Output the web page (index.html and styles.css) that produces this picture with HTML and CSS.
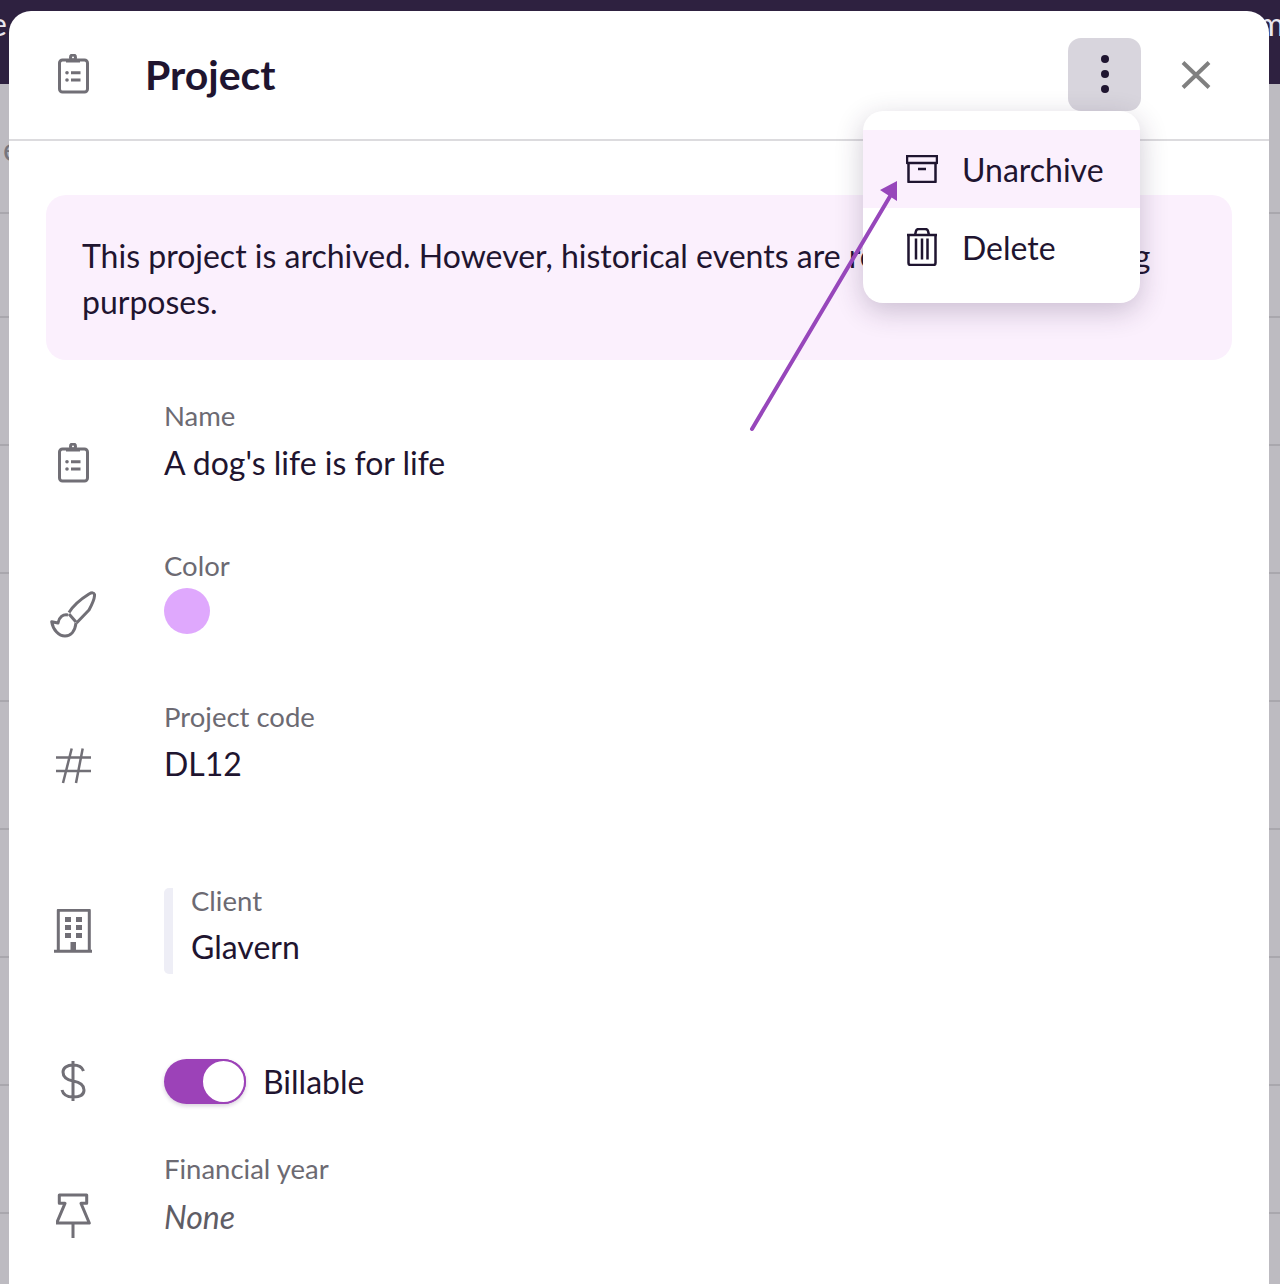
FILE: index.html
```html
<!DOCTYPE html>
<html lang="en">
<head>
    <meta charset="UTF-8">
    <meta name="viewport" content="width=device-width, initial-scale=1.0">
    <title>Project</title>
    <link rel="stylesheet" href="styles.css">
</head>
<body>
    <!-- bits of the page behind the modal -->
    <span class="behind behind-left">e</span>
    <span class="behind behind-right">m</span>
    <span class="behind behind-sub">e</span>

    <div class="modal">
        <div class="modal-header">
            <div class="icon-col">
                <svg class="icon" width="32" height="40" viewBox="0 0 32 40">
                    <rect x="2.500" y="6" width="28" height="32" rx="3"/>
                    <circle cx="16" cy="3.500" r="2.500"/>
                    <path class="solid" d="M9 5h14v3.500H9z"/>
                    <path d="M14 18.700h9.500M14 26h9.500"/>
                    <circle class="solid" cx="10" cy="18.700" r="1.800"/>
                    <circle class="solid" cx="10" cy="26" r="1.800"/>
                </svg>
            </div>
            <h1>Project</h1>
            <button class="menu-btn" type="button" aria-label="More">
                <span class="dot"></span><span class="dot"></span><span class="dot"></span>
            </button>
            <button class="close-btn" type="button" aria-label="Close">
                <svg width="30" height="28" viewBox="0 0 30 28"><path d="M2 1.500l26 25M28 1.500l-26 25"/></svg>
            </button>
        </div>

        <div class="modal-body">
            <div class="notice">This project is archived. However, historical events are retained for reporting purposes.</div>

            <div class="field field-name">
                <div class="icon-col">
                    <svg class="icon" width="32" height="40" viewBox="0 0 32 40">
                        <rect x="2.500" y="6" width="28" height="32" rx="3"/>
                        <circle cx="16" cy="3.500" r="2.500"/>
                        <path class="solid" d="M9 5h14v3.500H9z"/>
                        <path d="M14 18.700h9.500M14 26h9.500"/>
                        <circle class="solid" cx="10" cy="18.700" r="1.800"/>
                        <circle class="solid" cx="10" cy="26" r="1.800"/>
                    </svg>
                </div>
                <div>
                    <div class="label">Name</div>
                    <div class="value">A dog's life is for life</div>
                </div>
            </div>

            <div class="field field-color">
                <div class="icon-col">
                    <svg class="icon" width="46" height="48" viewBox="0 0 46 48">
                        <path d="M19 22.500C23 16 31 9 39 4Q43.500 1.500 44.500 4.500 45 9 39 20L26.500 33"/>
                        <path d="M19 24L26 32"/>
                        <path d="M18 25C13 24 9 27 8 33L1.700 31.700C3 40 9 46 15 46 21 46 25 41 26 33"/>
                    </svg>
                </div>
                <div>
                    <div class="label">Color</div>
                    <div class="swatch"></div>
                </div>
            </div>

            <div class="field field-code">
                <div class="icon-col">
                    <svg class="icon thin" width="36" height="36" viewBox="0 0 36 36">
                        <path d="M1 9.600h35M1 23h35M16.700 .5L8 35M27.700 .5L21 35"/>
                    </svg>
                </div>
                <div>
                    <div class="label">Project code</div>
                    <div class="value">DL12</div>
                </div>
            </div>

            <div class="field field-client">
                <div class="icon-col">
                    <svg class="icon" width="38" height="44" viewBox="0 0 38 44">
                        <path d="M4.300 42V1.300h31V42M0 42.200h38"/>
                        <path class="solid" d="M11 8h6v5h-6zM22 8h6v5h-6zM11 16h6v5h-6zM22 16h6v5h-6zM11 24h6v5h-6zM22 24h6v5h-6zM16.500 33h5.500v9h-5.500z"/>
                    </svg>
                </div>
                <div class="client-box">
                    <div class="label">Client</div>
                    <div class="value">Glavern</div>
                </div>
            </div>

            <div class="field field-billable">
                <div class="icon-col">
                    <svg class="icon" width="26" height="42" viewBox="0 0 26 42">
                        <path d="M23.500 11C22 6.500 18 5 13 5 7 5 3 8 3 12c0 6 5 8 10 9 6 1 11 4 11 9 0 5-5 7-11 7-6 0-10-3-11-7M13 1v40"/>
                    </svg>
                </div>
                <div class="toggle-row">
                    <div class="toggle"><span class="thumb"></span></div>
                    <div class="value">Billable</div>
                </div>
            </div>

            <div class="field field-year">
                <div class="icon-col">
                    <svg class="icon" width="35" height="46" viewBox="0 0 35 46">
                        <path d="M3.300 2h27.400v8.300H25L33.300 30H.7L9 10.300H3.300zM17 30v15"/>
                    </svg>
                </div>
                <div>
                    <div class="label">Financial year</div>
                    <div class="value value-none">None</div>
                </div>
            </div>
        </div>

        <div class="dropdown">
            <div class="dropdown-item active">
                <svg class="item-icon" width="32" height="28" viewBox="0 0 32 28">
                    <path d="M1 1h30v7H1zM2.500 8v19h27V8M12 14h8"/>
                </svg>
                Unarchive
            </div>
            <div class="dropdown-item">
                <svg class="item-icon" width="32" height="38" viewBox="0 0 32 38">
                    <path d="M1 7h30M9 7l1-4q.5-2 3-2h6q2.500 0 3 2l1 4M2.500 7v28q0 2 2 2h23q2 0 2-2V7M10 10.500v21M16 10.500v21M21.500 10.500v21"/>
                </svg>
                Delete
            </div>
        </div>

        <svg class="arrow" width="160" height="262" viewBox="0 0 160 262">
            <path class="arrow-line" d="M6 252L146 16"/>
            <path class="arrow-head" d="M151 4L134 13 151 24z"/>
        </svg>
    </div>
</body>
</html>
```

FILE: styles.css
```css
* {
    box-sizing: border-box;
}
html, body {
    height: 1284px;
}
body {
    margin: 0;
    padding: 11px 11px 0 9px;
    overflow: hidden;
    position: relative;
    font-family: "Lato", sans-serif;
    color: #1f1530;
    background-color: #bdbbc1;
    background-image:
        linear-gradient(#2e2140, #2e2140),
        linear-gradient(to bottom, #bdbbc1 212px, #a9a7ad 212px),
        repeating-linear-gradient(to bottom, transparent 0, transparent 126px, #a9a7ad 126px, #a9a7ad 128px);
    background-size: 100% 84px, 100% 214px, 100% 128px;
    background-position: 0 0, 0 0, 0 62px;
    background-repeat: no-repeat, no-repeat, repeat-y;
}
.behind {
    position: absolute;
    font-size: 32px;
    line-height: 32px;
}
.behind-left {
    left: -10px;
    top: 8px;
    color: #e9e6ee;
}
.behind-right {
    left: 1258px;
    top: 8px;
    color: #e9e6ee;
}
.behind-sub {
    left: 3px;
    top: 133px;
    color: #77757c;
}
.modal {
    position: relative;
    height: 1290px;
    background-color: white;
    border-radius: 22px 22px 0 0;
}
.modal-header {
    display: flex;
    align-items: center;
    height: 130px;
    padding: 0 37px 2px 37px;
    border-bottom: 2px solid #dcdbde;
}
.icon-col {
    width: 54px;
    flex-shrink: 0;
    display: flex;
    justify-content: center;
}
.modal-header h1 {
    margin: 2px 0 0 45px;
    font-size: 41px;
    line-height: 46px;
    font-weight: 700;
    flex: 1;
}
.icon {
    display: block;
    fill: none;
    stroke: #716f76;
    stroke-width: 3;
    stroke-linejoin: round;
}
.icon.thin {
    stroke-width: 2.500;
}
.icon .solid {
    fill: #716f76;
    stroke: none;
}
.menu-btn {
    width: 73px;
    height: 73px;
    padding: 0;
    border: none;
    border-radius: 13px;
    background-color: #d8d5dd;
    display: flex;
    flex-direction: column;
    align-items: center;
    justify-content: center;
    gap: 7px;
}
.dot {
    width: 8px;
    height: 8px;
    border-radius: 50%;
    background-color: #1f1530;
}
.close-btn {
    width: 30px;
    height: 28px;
    margin: 2px 21px 0 40px;
    padding: 0;
    border: none;
    background: none;
}
.close-btn svg {
    display: block;
    fill: none;
    stroke: #808080;
    stroke-width: 4;
}
.modal-body {
    padding: 54px 37px 0 37px;
}
.notice {
    padding: 38px 36px 34px 36px;
    height: 165px;
    background-color: #fbf0fd;
    border-radius: 20px;
    font-size: 32px;
    line-height: 46px;
}
.field {
    display: flex;
}
.field .icon-col {
    align-self: flex-end;
    margin-right: 64px;
}
.label {
    padding-top: 1px;
    font-size: 27.500px;
    line-height: 46px;
    color: #6c6a72;
}
.value {
    margin-top: 1px;
    font-size: 32px;
    line-height: 46px;
}
.value-none {
    margin-top: 2px;
    font-style: italic;
    color: #5f5d65;
}
.field-name {
    margin-top: 32px;
}
.field-name .icon-col {
    margin-bottom: 3px;
}
.field-color {
    margin-top: 56px;
}
.field-color .swatch {
    margin-top: -1px;
}
.field-color .icon-col {
    margin-bottom: -4px;
}
.field-code {
    margin-top: 59px;
}
.field-code .icon-col {
    margin-bottom: 3px;
}
.field-client {
    margin-top: 101px;
    align-items: center;
}
.field-client .icon-col {
    align-self: center;
}
.field-billable {
    margin-top: 83px;
    align-items: center;
}
.field-billable .icon-col {
    align-self: center;
}
.field-year {
    margin-top: 40px;
}
.field-year .icon-col {
    margin-bottom: 1px;
}
.swatch {
    width: 46px;
    height: 46px;
    border-radius: 50%;
    background-color: #dfa8fd;
}
.client-box {
    height: 86px;
    padding-left: 18px;
    border-left: 9px solid #eeeef6;
    border-radius: 5px;
}
.client-box .label {
    padding-top: 0;
    margin-top: -1px;
    line-height: 28px;
}
.client-box .value {
    margin-top: 9px;
}
.toggle-row {
    display: flex;
    align-items: center;
    gap: 18px;
}
.toggle-row .value {
    margin-top: 0;
    padding-top: 2px;
    margin-left: -1px;
}
.toggle {
    width: 82px;
    height: 45px;
    border-radius: 23px;
    background-color: #9c42b8;
    box-shadow: 0 2px 4px rgba(60, 20, 80, 0.2);
    display: flex;
    justify-content: flex-end;
}
.thumb {
    width: 45px;
    height: 45px;
    border: 2px solid #9c42b8;
    border-radius: 50%;
    background-color: white;
}
.dropdown {
    position: absolute;
    left: 854px;
    top: 100px;
    width: 277px;
    height: 192px;
    padding-top: 19px;
    background-color: white;
    border-radius: 20px;
    box-shadow: 0 8px 28px rgba(50, 30, 70, 0.24);
}
.dropdown-item {
    display: flex;
    align-items: center;
    height: 78px;
    padding-left: 43px;
    font-size: 32px;
}
.dropdown-item.active {
    background-color: #fbf0fd;
}
.item-icon {
    width: 32px;
    margin-right: 24px;
    fill: none;
    stroke: #1f1530;
    stroke-width: 2.500;
    stroke-linejoin: round;
}
.arrow {
    position: absolute;
    left: 737px;
    top: 166px;
}
.arrow-line {
    fill: none;
    stroke: #9747bb;
    stroke-width: 4;
    stroke-linecap: round;
}
.arrow-head {
    fill: #9747bb;
}
```
